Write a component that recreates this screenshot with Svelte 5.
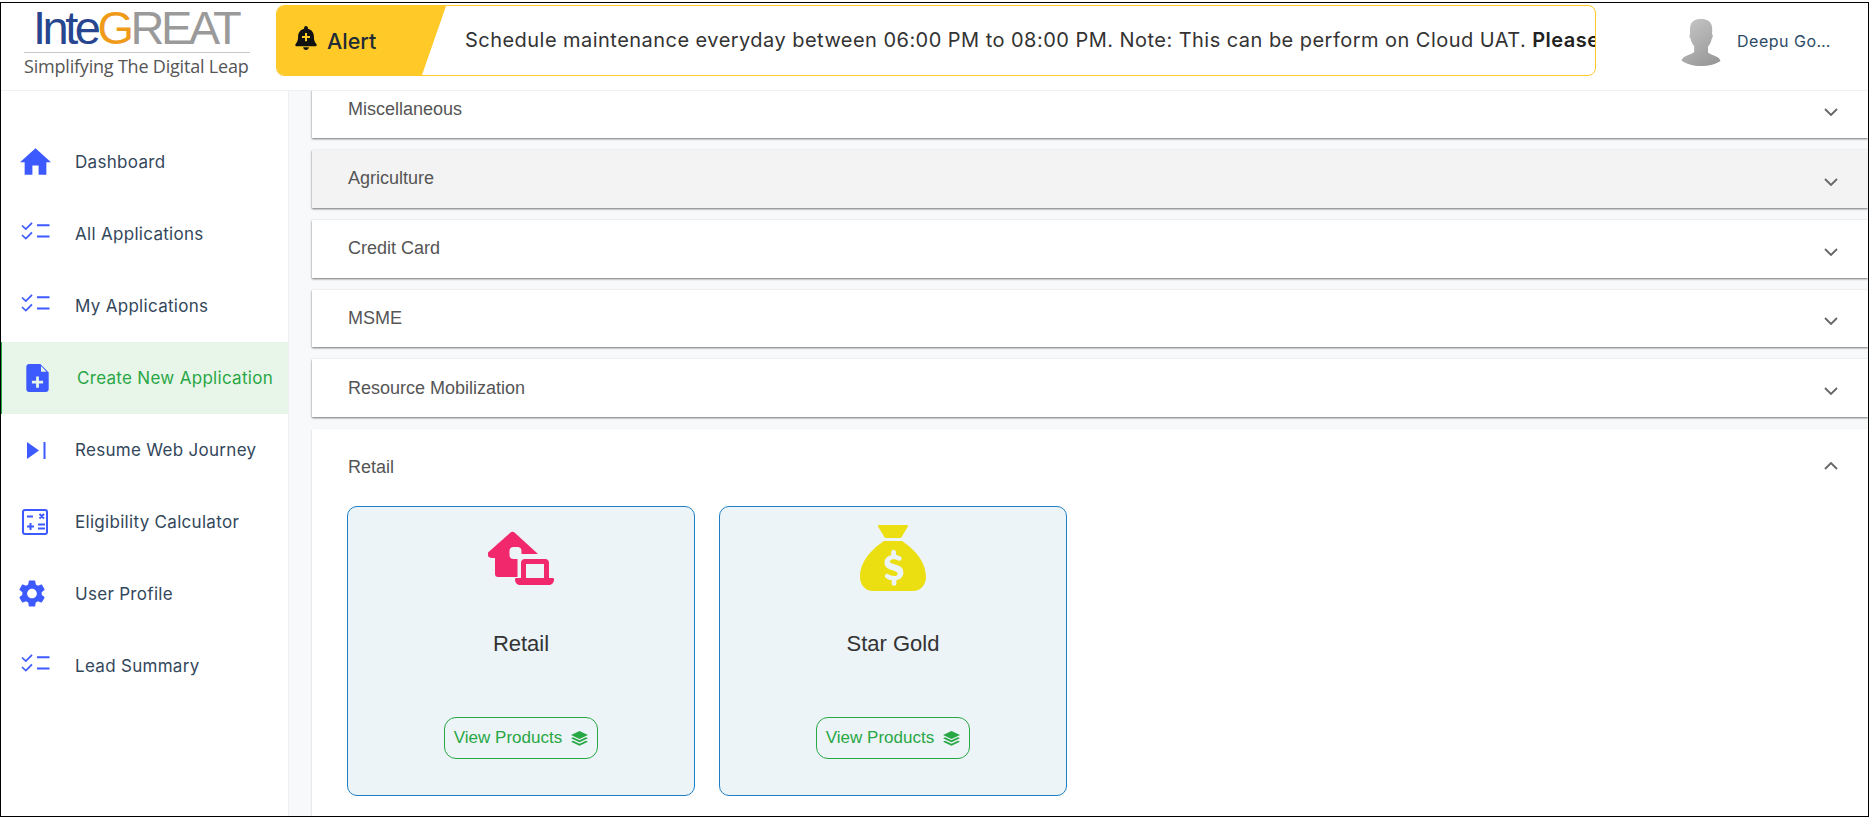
<script>
  const nav = [
    { label: 'Dashboard', icon: 'home' },
    { label: 'All Applications', icon: 'check' },
    { label: 'My Applications', icon: 'check' },
    { label: 'Create New Application', icon: 'file', active: true },
    { label: 'Resume Web Journey', icon: 'skip' },
    { label: 'Eligibility Calculator', icon: 'calc' },
    { label: 'User Profile', icon: 'gear' },
    { label: 'Lead Summary', icon: 'check' }
  ];
  const sections = ['Miscellaneous', 'Agriculture', 'Credit Card', 'MSME', 'Resource Mobilization'];
</script>

{#snippet layers()}
  <svg class="layers" viewBox="0 0 20 16" aria-hidden="true">
    <path d="M10 0 19 4.2 10 8.4 1 4.2Z" fill="#28a745" />
    <path d="M3.2 6.6 10 9.8l6.8-3.2L19 7.7l-9 4.2-9-4.2Z" fill="#28a745" />
    <path d="M3.2 10.3 10 13.5l6.8-3.2L19 11.4 10 15.6 1 11.4Z" fill="#28a745" />
  </svg>
{/snippet}

{#snippet chevron(up)}
  <svg class="chev" class:up viewBox="0 0 14 8" aria-hidden="true">
    <path d="M1 1l6 6 6-6" fill="none" stroke="#666" stroke-width="1.8" />
  </svg>
{/snippet}

<div class="frame">
  <header class="top">
    <div class="logo">
      <div class="brand"><span class="inte">Inte</span><span class="g">G</span><span class="reat">REAT</span></div>
      <div class="tag">Simplifying The Digital Leap</div>
    </div>
    <div class="alert">
      <div class="alert-label">
        <svg class="bell" viewBox="0 0 22 24" aria-hidden="true">
          <path fill-rule="evenodd" d="M11 0c1.1 0 1.9.8 1.9 1.9v.8c3.600.8 6 3.900 6 7.600 0 4.600 1.200 6.300 2.400 7.600.3.3.4.700.4 1 0 .8-.6 1.400-1.500 1.400H1.800C.9 20.300.3 19.700.3 18.900c0-.3.1-.7.4-1C1.900 16.600 3.100 14.900 3.100 10.300c0-3.700 2.400-6.800 6-7.600v-.8C9.100.8 9.900 0 11 0ZM10 7v3.100H7v2h3v3.100h2v-3.100h3v-2h-3V7Z" fill="#111" />
          <path d="M8.200 21.300h5.600c0 1.500-1.300 2.700-2.800 2.700s-2.800-1.200-2.800-2.700Z" fill="#111" />
        </svg>
        <span>Alert</span>
      </div>
      <div class="ticker">Schedule maintenance everyday between 06:00 PM to 08:00 PM. Note: This can be perform on Cloud UAT. <b>Please</b></div>
    </div>
    <div class="user">
      <svg class="avatar" viewBox="0 0 40 47" aria-hidden="true">
        <defs>
          <linearGradient id="av" x1="0.2" y1="0" x2="0.8" y2="1">
            <stop offset="0" stop-color="#c4c4c4" />
            <stop offset="1" stop-color="#979797" />
          </linearGradient>
        </defs>
        <path fill="url(#av)" d="M20 0c6 0 10.500 2.500 11 8 .3 3 .3 5 0 7 1.200.5 1 3-.5 5.500-.5 3-2 5.500-3.500 7v6c2 2 7 3 10 5 1.200.8 2 2 2.500 3.500C35 45 28 47 20 47S5 45 .5 41.500C1 40 2 38.800 3.200 38c3-2 8-3 10-5v-6c-1.500-1.500-3-4-3.500-7C8.200 18 8 15.500 9.200 15c-.3-2-.3-4 0-7C9.700 2.500 14 0 20 0Z" />
      </svg>
      <span class="uname">Deepu Goswami</span>
    </div>
  </header>

  <div class="body">
    <nav class="side">
      {#each nav as item}
        <div class="item" class:active={item.active}>
          <span class="ico">
            {#if item.icon === 'home'}
              <svg class="i-home" viewBox="2 3 20 17"><path d="M10 20v-6h4v6h5v-8h3L12 3 2 12h3v8z" /></svg>
            {:else if item.icon === 'check'}
              <svg class="i-check" viewBox="0 0 29 19">
                <path d="M1 3.500l3.800 3.600L11 .8M1 13l3.800 3.600L11 10.300" fill="none" stroke="#3d5afe" stroke-width="1.700" />
                <path d="M16 3.200h12.500M16 14.600h12.500" fill="none" stroke="#3d5afe" stroke-width="2" />
              </svg>
            {:else if item.icon === 'file'}
              <svg class="i-file" viewBox="4 2 16 20"><path d="M14 2H6c-1.100 0-1.990.9-1.990 2L4 20c0 1.100.89 2 1.990 2H18c1.100 0 2-.9 2-2V8l-6-6zm2 14h-3v3h-2v-3H8v-2h3v-3h2v3h3v2zm-1.500-8.500V3.500l4 4h-4z" /></svg>
            {:else if item.icon === 'skip'}
              <svg class="i-skip" viewBox="0 0 19 17"><path d="M0 0l12 8.500L0 17zM16.500 0h2v17h-2z" /></svg>
            {:else if item.icon === 'calc'}
              <svg class="i-calc" viewBox="0 0 26 26">
                <rect x="1" y="1" width="24" height="24" rx="2" fill="none" stroke="#3d5afe" stroke-width="2" />
                <path d="M5 7.500h6M5 17.500h7M8.500 14v7M17.500 5l4.500 4.500M22 5l-4.500 4.500M16 15.500h7M16 19.500h7" fill="none" stroke="#3d5afe" stroke-width="2" />
              </svg>
            {:else}
              <svg class="i-gear" viewBox="2.500 2 19 20"><path d="M19.140 12.940c.04-.3.06-.61.06-.94 0-.32-.02-.64-.07-.94l2.030-1.580c.18-.14.23-.41.12-.61l-1.920-3.320c-.12-.22-.37-.29-.59-.22l-2.390.96c-.5-.38-1.030-.7-1.620-.94l-.36-2.540c-.04-.24-.24-.41-.48-.41h-3.840c-.24 0-.43.17-.47.41l-.36 2.540c-.59.24-1.130.57-1.620.94l-2.390-.96c-.22-.08-.47 0-.59.22L2.740 8.870c-.12.21-.08.47.12.61l2.030 1.580c-.05.3-.09.63-.09.94s.02.64.07.94l-2.030 1.580c-.18.14-.23.41-.12.61l1.920 3.320c.12.22.37.29.59.22l2.390-.96c.5.38 1.030.7 1.620.94l.36 2.540c.05.24.24.41.48.41h3.840c.24 0 .44-.17.47-.41l.36-2.540c.59-.24 1.130-.56 1.620-.94l2.390.96c.22.08.47 0 .59-.22l1.920-3.320c.12-.22.07-.47-.12-.61l-2.010-1.580zM12 15.600c-1.980 0-3.600-1.620-3.600-3.600s1.620-3.600 3.600-3.600 3.600 1.620 3.600 3.600-1.620 3.600-3.600 3.600z" /></svg>
            {/if}
          </span>
          <span class="label">{item.label}</span>
        </div>
      {/each}
    </nav>

    <main class="content">
      {#each sections as s, i}
        <div class="acc" class:shade={i === 1}>
          <span>{s}</span>
          {@render chevron(false)}
        </div>
      {/each}
      <section class="open">
        <div class="open-head">
          <span>Retail</span>
          {@render chevron(true)}
        </div>
        <div class="tiles">
          <article class="tile">
            <div class="art">
              <svg class="house" viewBox="0 0 66 54" aria-hidden="true">
                <path d="M0 21.500 22.500 1.500c1.200-1 2.800-1 4 0L50 23H33.500v-3c0-2.500-1.500-4-4-4h-4c-2.500 0-4 1.500-4 4v4c0 2.500 1.500 4 4 4h4v18H10c-2 0-3-1-3-3V27H4c-3.500 0-5.500-3-4-5.500Z" fill="#f2286d" />
                <path fill-rule="evenodd" d="M33 32c0-2.500 1.500-4 4-4h20c2.500 0 4 1.500 4 4v15h3.500c1 0 1.500.5 1.500 1.500 0 3-2 5.500-5 5.500H32c-3 0-5-2.500-5-5.500 0-1 .5-1.500 1.500-1.500H33Zm5 1v14h18V33Z" fill="#f2286d" />
              </svg>
            </div>
            <h3>Retail</h3>
            <button class="view">View Products {@render layers()}</button>
          </article>
          <article class="tile">
            <div class="art">
              <svg class="bag" viewBox="0 0 66 66" aria-hidden="true">
                <path d="M18 1c0-.6.4-1 1-1h28c.8 0 1.300.7.9 1.500L41 13H25L18.300 2c-.2-.3-.3-.6-.3-1Z" fill="#ebdf12" />
                <path fill-rule="evenodd" d="M24 16h18c5 3.500 24 16 24 36 0 8-5.500 14-13 14H13C5.500 66 0 60 0 52 0 32 19 19.500 24 16Zm7.200 11v3.200c-4 .7-6.700 3.600-6.700 7.300 0 4.400 3 6.300 7.300 7.600l2.500.8c2.500.8 3.400 1.500 3.400 2.800 0 1.500-1.500 2.300-3.700 2.300-2 0-4-.6-5.500-1.700-1.100-.8-2.500-.6-3.200.4-.8 1.100-.5 2.500.6 3.300 1.500 1.100 3.500 1.900 5.800 2.200v3.300c0 1.300 1 2.300 2.300 2.300s2.400-1 2.400-2.300v-3.400c4.300-.8 7-3.600 7-7.600 0-4.500-3.200-6.500-7.400-7.700l-2.400-.7c-2.700-.8-3.600-1.500-3.600-2.700 0-1.400 1.300-2.200 3.500-2.200 1.700 0 3.200.4 4.700 1.300 1.100.6 2.500.3 3.100-.8.6-1.100.3-2.500-.8-3.100-1.500-.9-3-1.500-4.500-1.800V27c0-1.300-1.100-2.300-2.400-2.300S31.200 25.700 31.200 27Z" fill="#ebdf12" />
              </svg>
            </div>
            <h3>Star Gold</h3>
            <button class="view">View Products {@render layers()}</button>
          </article>
        </div>
      </section>
    </main>
  </div>
</div>

<style>
  :global(body) {
    margin: 0;
    background: #fff;
    font-family: "Liberation Sans", Arial, sans-serif;
  }
  .frame {
    box-sizing: border-box;
    width: 1869px;
    height: 815px;
    margin-top: 2px;
    border: 1px solid #000;
    display: flex;
    flex-direction: column;
    overflow: hidden;
    background: #fff;
  }
  .top {
    box-sizing: border-box;
    height: 88px;
    flex: none;
    border-bottom: 1px solid #f0f1f2;
    display: flex;
    align-items: flex-start;
  }
  .logo {
    width: 275px;
    flex: none;
    padding: 0 0 0 23px;
    box-sizing: border-box;
  }
  .brand {
    height: 50px;
    width: 226px;
    border-bottom: 1px solid #c8c8c8;
    padding-left: 9px;
    box-sizing: border-box;
    font-family: "Liberation Sans", sans-serif;
    font-size: 47px;
    line-height: 50px;
    letter-spacing: -3.5px;
    color: #9a9a9a;
    white-space: nowrap;
  }
  .inte { color: #27468f; }
  .g { color: #f09a1a; }
  .tag {
    font-family: "Open Sans", sans-serif;
    font-size: 18px;
    line-height: 27px;
    color: #555;
    white-space: nowrap;
    letter-spacing: -0.2px;
  }
  .alert {
    box-sizing: border-box;
    width: 1320px;
    height: 71px;
    margin-top: 2px;
    flex: none;
    border: 1px solid #ffc928;
    border-radius: 8px;
    display: flex;
    align-items: center;
    overflow: hidden;
    font-family: Inter, sans-serif;
  }
  .alert-label {
    width: 169px;
    height: 100%;
    flex: none;
    background: #ffc928;
    clip-path: polygon(0 0, 100% 0, 145px 100%, 0 100%);
    display: flex;
    align-items: center;
    gap: 10px;
    padding-left: 18px;
    box-sizing: border-box;
    font-size: 21.5px;
    font-weight: 500;
    color: #212b36;
  }
  .bell { width: 22px; height: 24px; flex: none; margin-top: -6px; }
  .ticker {
    margin-left: 19px;
    margin-top: -2px;
    font-size: 20px;
    white-space: nowrap;
    color: #333;
    letter-spacing: 0.46px;
  }
  .ticker b { font-weight: 600; color: #222; }
  .user {
    display: flex;
    align-items: center;
    margin-left: 85px;
    margin-top: 16px;
    gap: 16px;
  }
  .avatar { width: 40px; height: 47px; flex: none; }
  .uname {
    width: 99px;
    overflow: hidden;
    white-space: nowrap;
    text-overflow: ellipsis;
    font-family: Inter, sans-serif;
    font-size: 16px;
    color: #2c4a66;
    letter-spacing: 0.5px;
    margin-top: -3px;
  }
  .body { flex: 1; display: flex; min-height: 0; }
  .side {
    box-sizing: border-box;
    width: 288px;
    flex: none;
    padding-top: 35px;
    border-right: 1px solid #edf0f4;
    background: #fff;
    font-family: Inter, sans-serif;
  }
  .item {
    height: 72px;
    display: flex;
    align-items: center;
    font-size: 17px;
    letter-spacing: 0.3px;
    color: #33475b;
  }
  .item.active {
    background: #e8f5e9;
    border-left: 1px solid #28a745;
    color: #28a745;
  }
  .ico {
    width: 74px;
    flex: none;
    display: flex;
    padding-left: 19px;
    box-sizing: border-box;
  }
  .active .ico { width: 75px; padding-left: 24px; }
  .label { white-space: nowrap; }
  .ico svg { fill: #3d5afe; display: block; }
  .i-home { width: 31px; height: 27px; margin-top: -2px; }
  .i-check { width: 29px; height: 19px; margin-left: 1px; margin-top: -5px; }
  .i-file { width: 23px; height: 28px; }
  .i-skip { width: 19px; height: 17px; margin-left: 7px; }
  .i-calc { width: 26px; height: 26px; margin-left: 2px; }
  .i-gear { width: 26px; height: 27px; margin-top: -2px; margin-left: -1px; }
  .content {
    flex: 1;
    min-width: 0;
    background: #f7f9fa;
    padding-left: 23px;
    overflow: hidden;
  }
  .acc {
    box-sizing: border-box;
    height: 57.75px;
    margin-bottom: 12px;
    background: #fff;
    box-shadow: 0 1px 2px rgba(0, 0, 0, 0.55);
    padding: 0 30px 0 36px;
    display: flex;
    align-items: center;
    justify-content: space-between;
    font-size: 18px;
    color: #555;
  }
  .acc:first-child { margin-top: -10.75px; }
  .acc.shade { background: #f3f3f3; }
  .chev { width: 14px; height: 8px; display: block; margin-top: 6px; }
  .chev.up { transform: rotate(180deg); margin-top: -4px; }
  .open {
    background: #fff;
    height: 400px;
    box-shadow: 0 1px 2px rgba(0, 0, 0, 0.2);
  }
  .open-head {
    height: 77px;
    padding: 0 30px 0 36px;
    box-sizing: border-box;
    display: flex;
    align-items: center;
    justify-content: space-between;
    font-size: 18px;
    color: #555;
  }
  .tiles {
    display: flex;
    gap: 24px;
    padding-left: 35px;
  }
  .tile {
    box-sizing: border-box;
    width: 348px;
    height: 290px;
    border: 1px solid #1f7fc6;
    border-radius: 10px;
    background: #ecf4f7;
    display: flex;
    flex-direction: column;
    align-items: center;
    padding: 18px 0 36px;
  }
  .art {
    height: 66px;
    display: flex;
    align-items: flex-end;
    justify-content: center;
  }
  .house { width: 66px; height: 54px; margin-bottom: 6px; }
  .bag { width: 66px; height: 66px; }
  h3 {
    margin: 41px 0 0;
    font-size: 22px;
    font-weight: 400;
    line-height: 24px;
    color: #333;
  }
  .view {
    margin-top: auto;
    box-sizing: border-box;
    height: 42px;
    padding: 0 8px 0 9px;
    background: transparent;
    border: 1px solid #28a745;
    border-radius: 12px;
    color: #28a745;
    font-family: inherit;
    font-size: 17px;
    display: flex;
    align-items: center;
    gap: 8px;
  }
  .layers { width: 19px; height: 15px; display: block; }
</style>
